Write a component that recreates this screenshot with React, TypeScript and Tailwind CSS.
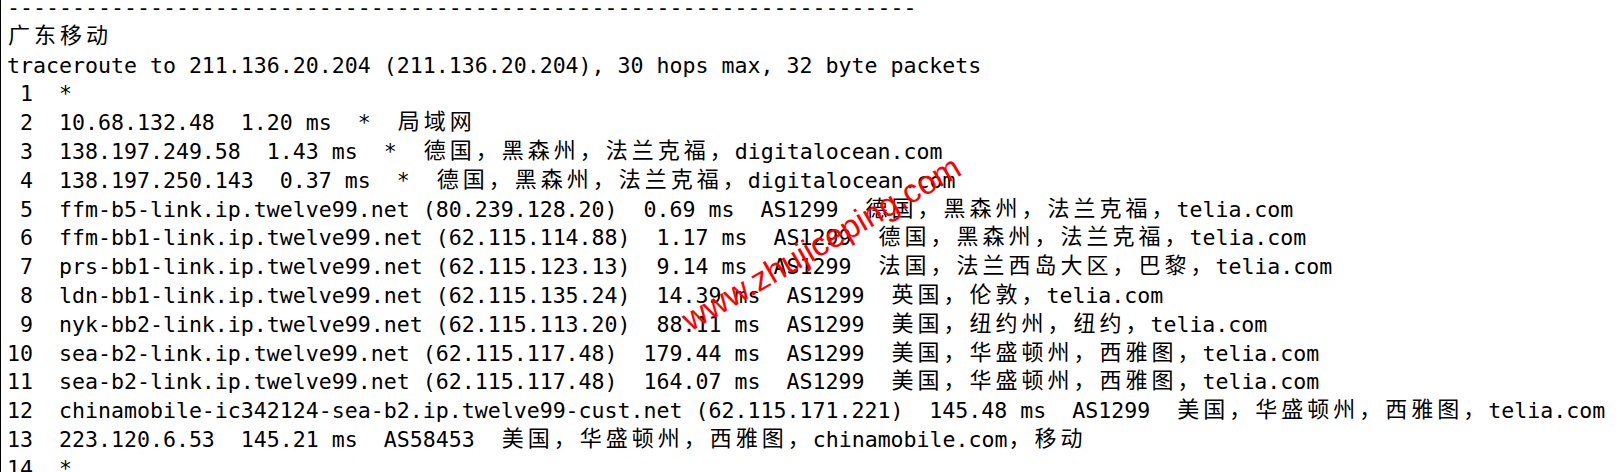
import React from 'react';

const lines: string[] = [
  '-'.repeat(70),
  '广东移动',
  'traceroute to 211.136.20.204 (211.136.20.204), 30 hops max, 32 byte packets',
  ' 1  *',
  ' 2  10.68.132.48  1.20 ms  *  局域网',
  ' 3  138.197.249.58  1.43 ms  *  德国，黑森州，法兰克福，digitalocean.com',
  ' 4  138.197.250.143  0.37 ms  *  德国，黑森州，法兰克福，digitalocean.com',
  ' 5  ffm-b5-link.ip.twelve99.net (80.239.128.20)  0.69 ms  AS1299  德国，黑森州，法兰克福，telia.com',
  ' 6  ffm-bb1-link.ip.twelve99.net (62.115.114.88)  1.17 ms  AS1299  德国，黑森州，法兰克福，telia.com',
  ' 7  prs-bb1-link.ip.twelve99.net (62.115.123.13)  9.14 ms  AS1299  法国，法兰西岛大区，巴黎，telia.com',
  ' 8  ldn-bb1-link.ip.twelve99.net (62.115.135.24)  14.39 ms  AS1299  英国，伦敦，telia.com',
  ' 9  nyk-bb2-link.ip.twelve99.net (62.115.113.20)  88.11 ms  AS1299  美国，纽约州，纽约，telia.com',
  '10  sea-b2-link.ip.twelve99.net (62.115.117.48)  179.44 ms  AS1299  美国，华盛顿州，西雅图，telia.com',
  '11  sea-b2-link.ip.twelve99.net (62.115.117.48)  164.07 ms  AS1299  美国，华盛顿州，西雅图，telia.com',
  '12  chinamobile-ic342124-sea-b2.ip.twelve99-cust.net (62.115.171.221)  145.48 ms  AS1299  美国，华盛顿州，西雅图，telia.com',
  '13  223.120.6.53  145.21 ms  AS58453  美国，华盛顿州，西雅图，chinamobile.com，移动',
  '14  *',
];

const isWide = (ch: string) => /[\u2e80-\u9fff\u3000-\u303f\uff00-\uffef]/.test(ch);

function Line({ text }: { text: string }) {
  const parts: { wide: boolean; s: string }[] = [];
  for (const ch of Array.from(text)) {
    const w = isWide(ch);
    const last = parts[parts.length - 1];
    if (!w && last && !last.wide) last.s += ch;
    else parts.push({ wide: w, s: ch });
  }
  return (
    <div className="h-[28.8px] leading-[28.8px] whitespace-pre">
      {parts.map((p, i) =>
        p.wide ? (
          <span
            key={i}
            className="relative top-[-1px] inline-block w-[26px] pl-[1px] text-[22px] leading-[22px] [font-family:'Noto_Sans_CJK_SC',sans-serif]"
          >
            {p.s}
          </span>
        ) : (
          <span key={i}>{p.s}</span>
        )
      )}
    </div>
  );
}

export default function App() {
  return (
    <div className="relative w-[1619px] h-[472px] overflow-hidden bg-white text-black border-l border-black">
      <div className="mt-[-6px] pl-[6px] text-[21.59px] [font-family:'DejaVu_Sans_Mono',monospace]">
        {lines.map((t, i) => (
          <Line key={i} text={t} />
        ))}
      </div>
      <div className="absolute left-[820px] top-[243px] -translate-x-1/2 -translate-y-1/2 rotate-[-30deg] whitespace-nowrap text-[33px] leading-[33px] text-[#ff0000] [font-family:'Liberation_Sans',Arial,sans-serif]">
        www.zhujiceping.com
      </div>
    </div>
  );
}
